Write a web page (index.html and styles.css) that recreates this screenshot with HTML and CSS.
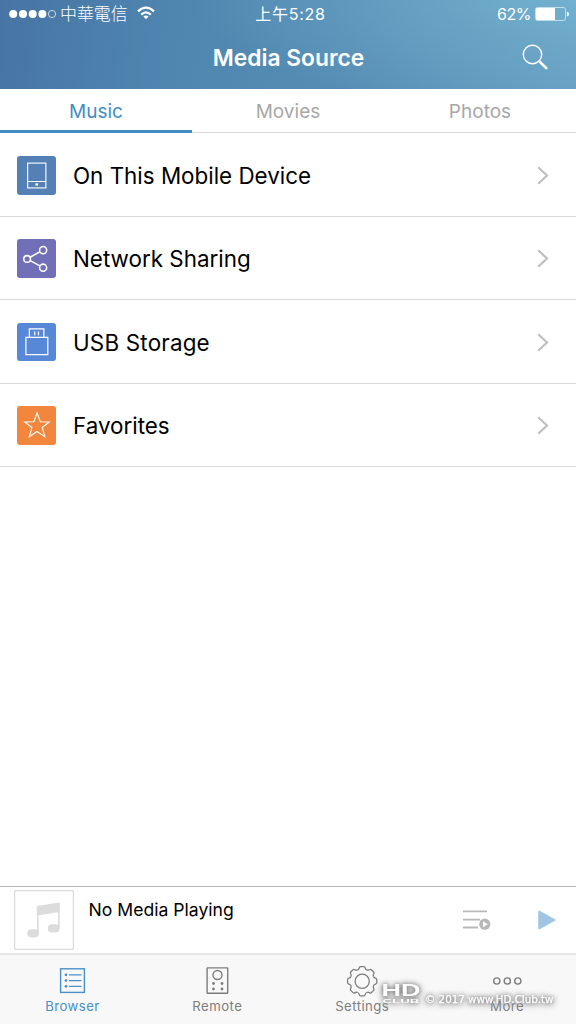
FILE: index.html
```html
<!DOCTYPE html>
<html lang="en">
<head>
<meta charset="utf-8">
<title>Media Source</title>
<link rel="stylesheet" href="styles.css">
</head>
<body>
<div class="app">
  <header class="header">
    <div class="status">
      <div class="carrier">
        <svg class="signal" width="48" height="10" viewBox="0 0 48 10"><g fill="#fff"><circle cx="4.2" cy="4" r="4"/><circle cx="14" cy="4" r="4"/><circle cx="23.7" cy="4" r="4"/><circle cx="33.4" cy="4" r="4"/></g><circle cx="43" cy="4" r="3.6" fill="none" stroke="#fff" stroke-width=".7"/></svg>
        <span class="operator">中華電信</span>
        <svg class="wifi" width="18" height="14" viewBox="0 0 18 14"><g fill="none" stroke="#fff" stroke-width="2.2"><path d="M1 5.4Q9-2.2 17 5.4"/><path d="M4.2 8.6Q9 4.2 13.8 8.6"/></g><path d="M6.4 10.6Q9 8.6 11.6 10.6L9 13.2Z" fill="#fff"/></svg>
      </div>
      <span class="clock">上午5:28</span>
      <div class="power"><span class="percent">62%</span>
        <svg class="battery" width="34" height="14" viewBox="0 0 34 14"><rect x=".5" y=".5" width="30" height="13" rx="2" fill="none" stroke="#d7ebf4" stroke-width=".8"/><path d="M1 2Q1 1 2 1H20V13H2Q1 13 1 12ZM32 4.5Q34 5 34 7T32 9.5Z" fill="#fff"/></svg>
      </div>
    </div>
    <div class="titlebar">
      <h1 class="title">Media Source</h1>
      <svg class="search" width="27" height="27" viewBox="0 0 27 27" fill="none" stroke="#fff"><circle cx="10.5" cy="10.5" r="9.2" stroke-width="1.4"/><path d="M17 17L25 24.8" stroke-width="2.5"/></svg>
    </div>
  </header>

  <nav class="tabs">
    <div class="tab tab-active"><span>Music</span></div>
    <div class="tab"><span>Movies</span></div>
    <div class="tab"><span>Photos</span></div>
  </nav>

  <main class="sources">
    <div class="source">
      <svg class="badge device" viewBox="0 0 38 38"><g fill="none" stroke="#fff" stroke-width="1.1"><rect x="10.5" y="7" width="18" height="24.5"/><path d="M10.5 25.2H28.5"/></g><rect x="18.2" y="27" width="2.6" height="2.2" fill="#fff"/></svg>
      <span class="label">On This Mobile Device</span>
      <svg class="chevron" viewBox="0 0 12 19"><path d="M1.2 1.2L10 9.5L1.2 17.8"/></svg>
    </div>
    <div class="source">
      <svg class="badge network" viewBox="0 0 38 38"><g fill="none" stroke="#fff" stroke-width="1.5"><circle cx="10" cy="19.7" r="3.3"/><circle cx="25.8" cy="11" r="3.5"/><circle cx="25.8" cy="28.3" r="3.5"/><path d="M12.9 18L22.7 12.6M12.9 21.3L22.7 26.6"/></g></svg>
      <span class="label">Network Sharing</span>
      <svg class="chevron" viewBox="0 0 12 19"><path d="M1.2 1.2L10 9.5L1.2 17.8"/></svg>
    </div>
    <div class="source">
      <svg class="badge usb" viewBox="0 0 38 38"><g fill="none" stroke="#fff" stroke-width="1.2"><path d="M8.8 14.2H30.4V31.3H8.8ZM12.2 14V5.9H26.5V14"/><path d="M17.5 8.4V12M21.2 8.4V12"/></g></svg>
      <span class="label label-usb">USB Storage</span>
      <svg class="chevron" viewBox="0 0 12 19"><path d="M1.2 1.2L10 9.5L1.2 17.8"/></svg>
    </div>
    <div class="source">
      <svg class="badge favorite" viewBox="0 0 38 38"><path d="M19.8 6.8L23 15.5L31.9 15.8L24.9 21.3L27.4 30.3L19.8 25.1L12.2 30.3L14.7 21.3L7.7 15.8L16.7 15.5Z" fill="none" stroke="#fff" stroke-width="1.1"/></svg>
      <span class="label">Favorites</span>
      <svg class="chevron" viewBox="0 0 12 19"><path d="M1.2 1.2L10 9.5L1.2 17.8"/></svg>
    </div>
  </main>

  <section class="player">
    <svg class="artwork" width="60" height="60" viewBox="0 0 60 60"><rect x=".6" y=".6" width="58.8" height="58.8" fill="#fff" stroke="#dcdcdc" stroke-width="1.2"/><g fill="#dcdcdc"><path d="M22.8 16L45.3 12.5V22L22.8 25.5Z"/><rect x="13.3" y="39.2" width="11.6" height="8.2" rx="4.1"/><rect x="33.8" y="34.3" width="11.8" height="8.2" rx="4.1"/></g><path d="M23.9 16V43M44.9 13V38" stroke="#dcdcdc" stroke-width="1.6"/></svg>
    <span class="nowplaying">No Media Playing</span>
    <svg class="queue" width="28" height="20" viewBox="0 0 28 20"><path d="M0 1.3H24M0 9.7H17M0 17.5H15" stroke="#b8b8b8" stroke-width="1.8"/><circle cx="21.8" cy="14.2" r="5.6" fill="#b8b8b8"/><path d="M20 11.2V17.2L24.8 14.2Z" fill="#fff"/></svg>
    <svg class="play" width="18" height="20" viewBox="0 0 18 20"><path d="M.8.8V19.2L17.3 10Z" fill="#a0c5e3" stroke="#a0c5e3" stroke-linejoin="round"/></svg>
  </section>

  <footer class="toolbar">
    <div class="tool tool-active">
      <svg class="toolicon" viewBox="0 0 34 32"><g fill="none" stroke="currentColor"><rect x="5.6" y="4.8" width="23.8" height="23.6" stroke-width="1.4"/><path d="M14 10.8H26.5M14 16.6H26.5M14 22.3H26.5" stroke-width="1.3"/></g><g fill="currentColor"><circle cx="11" cy="10.8" r="1.4"/><circle cx="11" cy="16.6" r="1.4"/><circle cx="11" cy="22.3" r="1.4"/></g></svg>
      <span>Browser</span>
    </div>
    <div class="tool">
      <svg class="toolicon" viewBox="0 0 34 32"><g fill="none" stroke="currentColor" stroke-width="1.4"><rect x="7.1" y="3.9" width="20.6" height="25.4" rx=".5"/><circle cx="17.5" cy="11" r="4.5"/></g><g fill="currentColor"><circle cx="13.5" cy="19.5" r="1.4"/><circle cx="22" cy="19.5" r="1.4"/><circle cx="13.5" cy="25" r="1.4"/><circle cx="22" cy="25" r="1.4"/></g></svg>
      <span>Remote</span>
    </div>
    <div class="tool">
      <svg class="toolicon" viewBox="-17.2 -17.2 34 32"><defs><path id="tooth" d="M-4.7-11.3Q-3.3-11.8-3-13.2Q-2.7-14.6-1.6-14.6H1.6Q2.7-14.6 3-13.2Q3.3-11.8 4.7-11.3"/></defs><g fill="none" stroke="currentColor" stroke-width="1.3"><use href="#tooth"/><use href="#tooth" transform="rotate(45)"/><use href="#tooth" transform="rotate(90)"/><use href="#tooth" transform="rotate(135)"/><use href="#tooth" transform="rotate(180)"/><use href="#tooth" transform="rotate(225)"/><use href="#tooth" transform="rotate(270)"/><use href="#tooth" transform="rotate(315)"/><circle r="7.1"/></g></svg>
      <span>Settings</span>
    </div>
    <div class="tool">
      <svg class="toolicon" viewBox="0 0 34 32"><g fill="none" stroke="currentColor" stroke-width="1.4"><circle cx="6.8" cy="17" r="3.1"/><circle cx="17.3" cy="17" r="3.1"/><circle cx="27.8" cy="17" r="3.1"/></g></svg>
      <span>More</span>
    </div>
    <svg class="watermark" width="204" height="46" viewBox="370 974 204 46">
      <g class="mark">
        <text class="hd" x="381.5" y="996" textLength="39" lengthAdjust="spacingAndGlyphs">HD</text>
        <text class="club" x="382.5" y="1003.3" textLength="37" lengthAdjust="spacingAndGlyphs">CLUB</text>
        <text class="copy" x="425" y="1002.5" textLength="128.5" lengthAdjust="spacingAndGlyphs">© 2017 www.HD.Club.tw</text>
      </g>
    </svg>
  </footer>
</div>
</body>
</html>
```
FILE: styles.css
```css
* { box-sizing: border-box; }
body { margin: 0; font-family: Inter, "Noto Sans CJK TC", sans-serif; }
svg { display: block; flex: none; }
span { white-space: nowrap; }
.app { width: 576px; height: 1024px; display: flex; flex-direction: column; background: #fff; overflow: hidden; }

.header {
  height: 89px; flex: none; color: #fff;
  background: radial-gradient(ellipse 420px 130px at 610px -10px, #75b3d1 0%, rgba(117,179,209,.45) 45%, rgba(117,179,209,0) 100%),
    linear-gradient(100deg, #4774a4 0%, #4f86b0 30%, #568db4 60%, #5f97bb 85%, #659dc1 100%);
}
.status { height: 29px; display: grid; grid-template-columns: 1fr auto 1fr; align-items: center; padding: 0 7px 0 9px; }
.carrier { display: flex; align-items: center; }
.operator { font: 300 16.9px/26px "Noto Sans CJK TC", sans-serif; margin-left: 3px; margin-top: -3px; }
.wifi { margin-left: 9px; margin-top: -3px; }
.clock { font-size: 16px; line-height: 26px; letter-spacing: .75px; padding-left: 3px; margin-top: -2px; }
.power { display: flex; justify-content: flex-end; align-items: center; gap: 4px; margin-top: -2px; }
.percent { font-size: 16px; letter-spacing: -.45px; }
.titlebar { height: 60px; display: grid; grid-template-columns: 53px 1fr 27px; padding-right: 27px; }
.title { grid-column: 2; margin: 13px 0 0 28px; padding-right: 26px; text-align: center; font-size: 22.8px; line-height: 32px; font-weight: 600; }
.search { margin-top: 15px; }

.tabs { height: 44px; flex: none; display: flex; border-bottom: 1px solid #d7d7d7; }
.tab { flex: 1; height: 44px; display: flex; justify-content: center; font-size: 19px; line-height: 45px; color: #a7a7a7; letter-spacing: .02px; }
.tab-active { color: #438dc7; border-bottom: 3px solid #438dc7; }

.sources { height: 753px; flex: none; padding-top: .6px; }
.source { height: 83.4px; border-bottom: 1px solid #dadada; display: flex; align-items: center; padding: 1px 27px 0 17px; }
.badge { width: 38.5px; height: 38.5px; border-radius: 3px; }
.device { background: #5580b6; }
.network { background: #716fb8; }
.usb { background: #5788d7; }
.favorite { background: #f1863c; }
.label { flex: 1; margin-left: 17.5px; padding-top: 1px; font-size: 22.4px; line-height: 32px; color: #000; }
.label-usb { letter-spacing: .2px; }
.chevron { width: 12px; height: 19px; fill: none; stroke: #bfbfc3; stroke-width: 2.2; }

.player { height: 68px; flex: none; border-top: 1.5px solid #b5b7b7; display: flex; padding: 3px 20px 0 14px; background: #fff; }
.nowplaying { flex: 1; margin-left: 14.5px; font-size: 17.6px; line-height: 40px; color: #000; }
.queue { margin-top: 20px; margin-right: 47px; }
.play { margin-top: 20px; }

.toolbar { height: 71px; margin-top: -1px; flex: none; position: relative; display: flex; background: #f8f8f8; border-top: 2px solid #e6e6e6; padding-top: 9px; }
.tool { width: 144.9px; flex: none; display: flex; flex-direction: column; align-items: center; color: #7d7d7d; font-size: 13.2px; line-height: 18px; letter-spacing: .45px; }
.tool-active { color: #4990c9; }
.toolicon { width: 34px; height: 32px; margin-bottom: 1px; overflow: visible; }
.watermark { position: absolute; left: 370px; top: 19px; overflow: visible; }
.mark { fill: #fff; filter: drop-shadow(0 0 2px #777) drop-shadow(0 1px 3px #999); }
.hd { font: bold 17px "Liberation Sans", sans-serif; }
.club { font: bold 6px "Liberation Sans", sans-serif; }
.copy { font: 10.5px "DejaVu Sans", sans-serif; stroke: #fff; stroke-width: .25px; }
```
